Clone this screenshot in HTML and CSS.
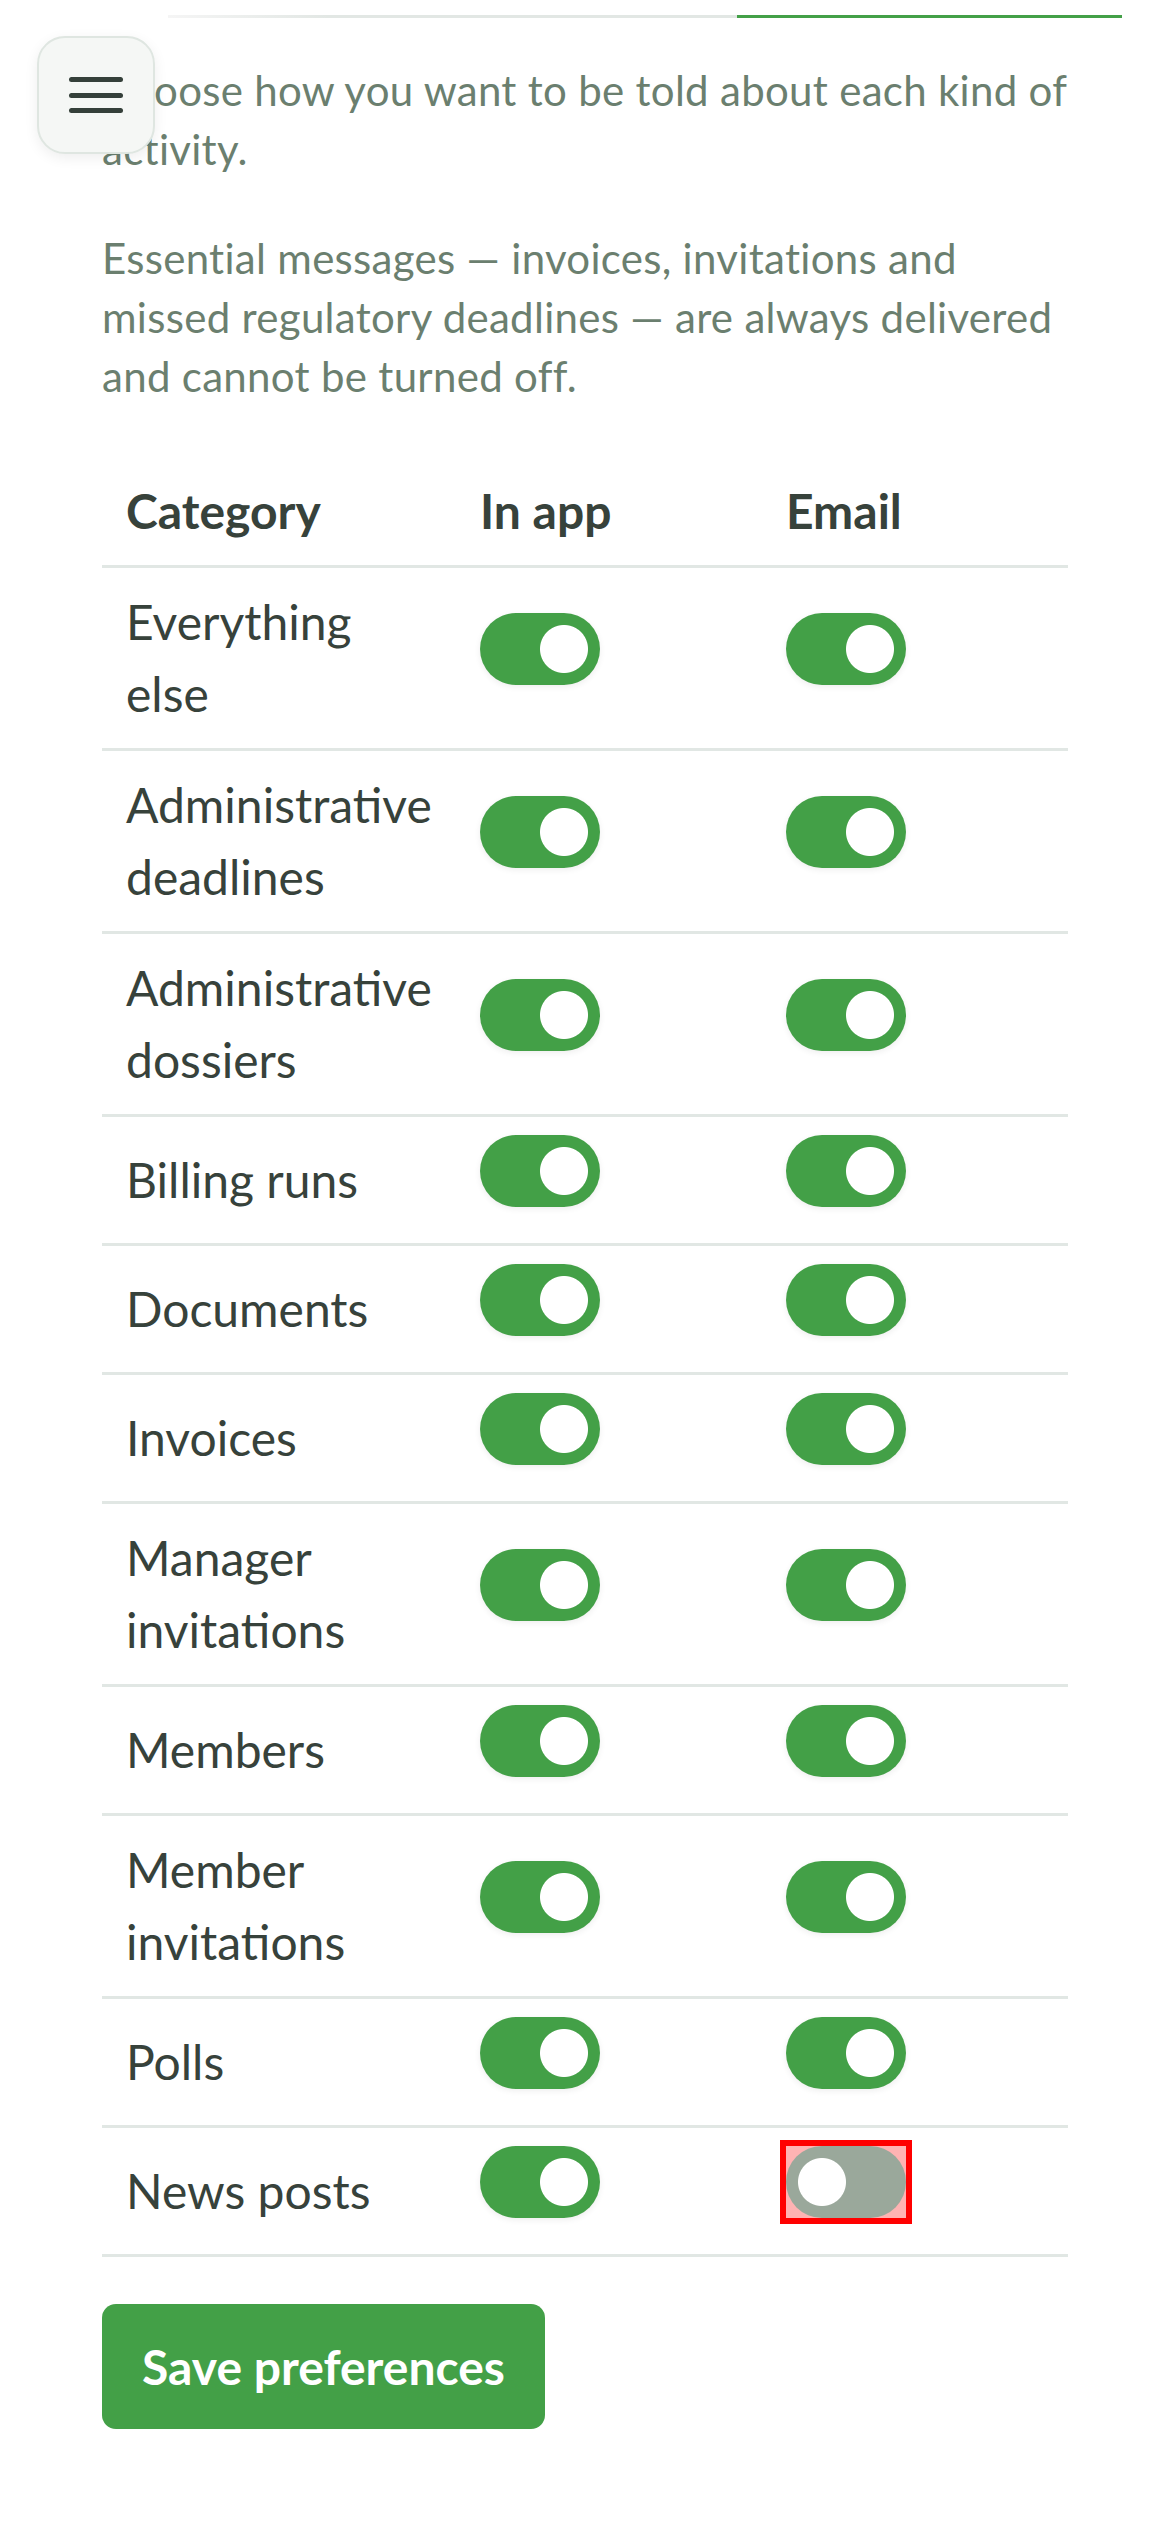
FILE: index.html
```html
<!DOCTYPE html>
<html lang="en">
<head>
  <meta charset="UTF-8" />
  <meta name="viewport" content="width=device-width, initial-scale=1.0"/>
  <title>Notification preferences</title>
  <link rel="stylesheet" href="styles.css">
</head>
<body>

  <button class="menu-btn" aria-label="Menu">
    <span></span><span></span><span></span>
  </button>

  <nav class="tabs">
    <div class="tabs-track">
      <div class="tab"></div>
      <div class="tab active"></div>
    </div>
  </nav>

  <main class="content">
    <p class="intro">Choose how you want to be told about each kind of activity.</p>
    <p class="note">Essential messages — invoices, invitations and missed regulatory deadlines — are always delivered and cannot be turned off.</p>

    <form>
      <table class="prefs">
        <colgroup>
          <col class="col-cat">
          <col class="col-chan">
          <col class="col-chan">
        </colgroup>
        <thead>
          <tr>
            <th>Category</th>
            <th>In app</th>
            <th>Email</th>
          </tr>
        </thead>
        <tbody>
          <tr>
            <td>Everything else</td>
            <td><label class="switch-cell"><input type="checkbox" class="switch" checked></label></td>
            <td><label class="switch-cell"><input type="checkbox" class="switch" checked></label></td>
          </tr>
          <tr>
            <td>Administrative deadlines</td>
            <td><label class="switch-cell"><input type="checkbox" class="switch" checked></label></td>
            <td><label class="switch-cell"><input type="checkbox" class="switch" checked></label></td>
          </tr>
          <tr>
            <td>Administrative dossiers</td>
            <td><label class="switch-cell"><input type="checkbox" class="switch" checked></label></td>
            <td><label class="switch-cell"><input type="checkbox" class="switch" checked></label></td>
          </tr>
          <tr>
            <td>Billing runs</td>
            <td><label class="switch-cell"><input type="checkbox" class="switch" checked></label></td>
            <td><label class="switch-cell"><input type="checkbox" class="switch" checked></label></td>
          </tr>
          <tr>
            <td>Documents</td>
            <td><label class="switch-cell"><input type="checkbox" class="switch" checked></label></td>
            <td><label class="switch-cell"><input type="checkbox" class="switch" checked></label></td>
          </tr>
          <tr>
            <td>Invoices</td>
            <td><label class="switch-cell"><input type="checkbox" class="switch" checked></label></td>
            <td><label class="switch-cell"><input type="checkbox" class="switch" checked></label></td>
          </tr>
          <tr>
            <td>Manager invitations</td>
            <td><label class="switch-cell"><input type="checkbox" class="switch" checked></label></td>
            <td><label class="switch-cell"><input type="checkbox" class="switch" checked></label></td>
          </tr>
          <tr>
            <td>Members</td>
            <td><label class="switch-cell"><input type="checkbox" class="switch" checked></label></td>
            <td><label class="switch-cell"><input type="checkbox" class="switch" checked></label></td>
          </tr>
          <tr>
            <td>Member invitations</td>
            <td><label class="switch-cell"><input type="checkbox" class="switch" checked></label></td>
            <td><label class="switch-cell"><input type="checkbox" class="switch" checked></label></td>
          </tr>
          <tr>
            <td>Polls</td>
            <td><label class="switch-cell"><input type="checkbox" class="switch" checked></label></td>
            <td><label class="switch-cell"><input type="checkbox" class="switch" checked></label></td>
          </tr>
          <tr>
            <td>News posts</td>
            <td><label class="switch-cell"><input type="checkbox" class="switch" checked></label></td>
            <td><label class="switch-cell"><span class="flagged"><input type="checkbox" class="switch"></span></label></td>
          </tr>
        </tbody>
      </table>

      <div class="actions">
        <button type="submit" class="btn-save">Save preferences</button>
      </div>
    </form>
  </main>

</body>
</html>
```

FILE: styles.css
```css
body {
  margin: 0;
  font-family: Lato, "Open Sans", sans-serif;
  color: #37423b;
  background: #fff;
}

/* floating menu button */
.menu-btn {
  position: fixed;
  top: 36px;
  left: 37px;
  width: 118px;
  height: 118px;
  padding: 0;
  border: 2px solid #dfe6e1;
  border-radius: 28px;
  background: #f5f7f5;
  box-shadow: 0 4px 14px rgba(0,0,0,0.07);
  display: flex;
  flex-direction: column;
  align-items: center;
  justify-content: center;
  gap: 10.5px;
  z-index: 10;
}
.menu-btn span {
  display: block;
  width: 54px;
  height: 5px;
  border-radius: 3px;
  background: #35403a;
}

/* tab strip (scrolled) */
.tabs {
  padding: 15px 48px 0 168px;
}
.tabs-track {
  display: flex;
  height: 3px;
}
.tab {
  flex: 1;
  background: linear-gradient(to right, #f5f5f5 0, #e2e7e4 160px);
}
.tab.active {
  flex: 0 0 385px;
  background: #43a047;
}

.content {
  padding: 43px 102px 0;
}

.intro, .note {
  margin: 0;
  font-size: 42px;
  line-height: 59px;
  letter-spacing: 0.3px;
  color: #6b7f6f;
}
.intro {
  margin-bottom: 50px;
}
.note {
  margin-bottom: 51px;
}

.prefs {
  width: 100%;
  table-layout: fixed;
  border-collapse: separate;
  border-spacing: 0;
  font-size: 48px;
  line-height: 72px;
}
.col-cat {
  width: 354px;
}
.col-chan {
  width: 306px;
}
.prefs th, .prefs td {
  padding: 18px 24px;
  text-align: left;
  vertical-align: middle;
  border-bottom: 3px solid #e1e7e4;
}
.prefs th {
  font-weight: 700;
}

.switch-cell {
  display: block;
  height: 90px;
}
.switch {
  appearance: none;
  -webkit-appearance: none;
  display: block;
  margin: 0;
  width: 120px;
  height: 72px;
  border-radius: 36px;
  background: radial-gradient(circle 24px at 36px 36px, #fff 23.5px, transparent 24.5px), #9aa89b;
  box-shadow: 0 2px 6px rgba(0,0,0,0.07);
}
.switch:checked {
  background: radial-gradient(circle 24px at 84px 36px, #fff 23.5px, transparent 24.5px), #43a047;
}

.flagged {
  display: block;
  width: 120px;
  height: 72px;
  outline: 6px solid #ff0000;
  background: #ffb3b3;
}
.flagged .switch {
  box-shadow: none;
}

.actions {
  margin-top: 47px;
}
.btn-save {
  height: 125px;
  padding: 0 40px;
  border: none;
  border-radius: 14px;
  background: #43a047;
  color: #fff;
  font-family: Lato, "Open Sans", sans-serif;
  font-size: 48px;
  font-weight: 700;
}
```
